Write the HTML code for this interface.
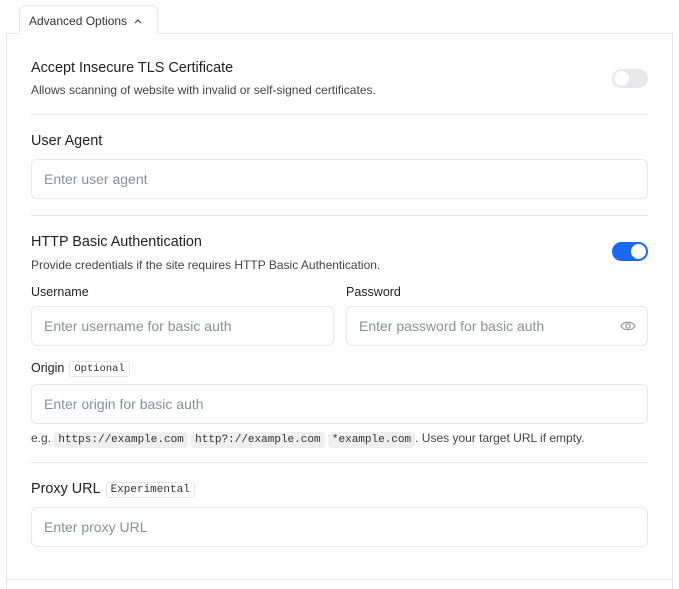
<!DOCTYPE html>
<html><head><style>
*{box-sizing:border-box;margin:0;padding:0}
html,body{width:679px;height:589px;overflow:hidden}
body{background:#fff;font-family:"Liberation Sans",sans-serif;color:#1f2328;position:relative}
.abs{position:absolute}
.panel{left:6px;top:33px;width:667px;height:570px;border:1px solid #e5e7eb}
.tab{left:19px;top:5px;width:139px;height:29px;border:1px solid #e5e7eb;border-bottom:1px solid #fff;border-radius:6px 6px 0 0;background:#fff;font-size:12px;padding:8px 0 0 9px;color:#333}
.t{font-size:14.4px;color:#222}
.d{font-size:12px;color:#444}
.l{font-size:12.5px;color:#222}
.hr{left:31px;width:617px;height:1px;background:#e5e7eb}
.in{height:40px;border:1px solid #e8e8eb;border-radius:6px;font-size:14px;color:#8a8f98;padding:11px 0 0 12px}
.tg{width:36px;height:19px;border-radius:10px}
.badge{display:inline-block;font-family:"Liberation Mono",monospace;font-size:10.5px;border:1px solid #e5e7eb;border-radius:3px;padding:1px 4px;margin-left:5px;font-weight:400;color:#333;vertical-align:1px}
.code{font-family:"Liberation Mono",monospace;font-size:11px;background:#eeeeee;border-radius:4px;padding:2px 4px;color:#333}
</style></head><body>
<div class="abs panel"></div>
<div class="abs" style="left:6px;top:579px;width:667px;height:1px;background:#e5e7eb"></div>
<div class="abs tab">Advanced Options <svg width="10" height="8" viewBox="0 0 10 8" style="margin-left:3px"><path d="M2 6 L5 3 L8 6" fill="none" stroke="#444" stroke-width="1.2"/></svg></div>

<div class="abs t" style="left:31px;top:60px">Accept Insecure TLS Certificate</div>
<div class="abs d" style="left:31px;top:83px">Allows scanning of website with invalid or self-signed certificates.</div>
<div class="abs tg" style="left:612px;top:69px;background:#e8e8ea"><div style="position:absolute;left:2px;top:2px;width:15px;height:15px;border-radius:50%;background:#fff"></div></div>
<div class="abs hr" style="top:114px"></div>

<div class="abs t" style="left:31px;top:133px">User Agent</div>
<div class="abs in" style="left:31px;top:159px;width:617px">Enter user agent</div>
<div class="abs hr" style="top:215px"></div>

<div class="abs t" style="left:31px;top:234px">HTTP Basic Authentication</div>
<div class="abs d" style="left:31px;top:258px">Provide credentials if the site requires HTTP Basic Authentication.</div>
<div class="abs tg" style="left:612px;top:242px;background:#1769f5"><div style="position:absolute;right:2px;top:2px;width:15px;height:15px;border-radius:50%;background:#fff"></div></div>

<div class="abs l" style="left:31px;top:285px">Username</div>
<div class="abs l" style="left:346px;top:285px">Password</div>
<div class="abs in" style="left:31px;top:306px;width:303px">Enter username for basic auth</div>
<div class="abs in" style="left:346px;top:306px;width:302px">Enter password for basic auth</div>
<svg class="abs" style="left:620px;top:319px" width="16" height="14" viewBox="0 0 16 14"><path d="M1 7 C4 2,12 2,15 7 C12 12,4 12,1 7Z" fill="none" stroke="#999" stroke-width="1.2"/><circle cx="8" cy="7" r="2.2" fill="none" stroke="#999" stroke-width="1.2"/></svg>

<div class="abs l" style="left:31px;top:361px">Origin<span class="badge">Optional</span></div>
<div class="abs in" style="left:31px;top:384px;width:617px">Enter origin for basic auth</div>
<div class="abs d" style="left:31px;top:431px;color:#444">e.g. <span class="code">https://example.com</span> <span class="code">http?://example.com</span> <span class="code">*example.com</span>. Uses your target URL if empty.</div>
<div class="abs hr" style="top:462px"></div>

<div class="abs t" style="left:31px;top:481px">Proxy URL<span class="badge" style="font-size:11px">Experimental</span></div>
<div class="abs in" style="left:31px;top:507px;width:617px">Enter proxy URL</div>
</body></html>
